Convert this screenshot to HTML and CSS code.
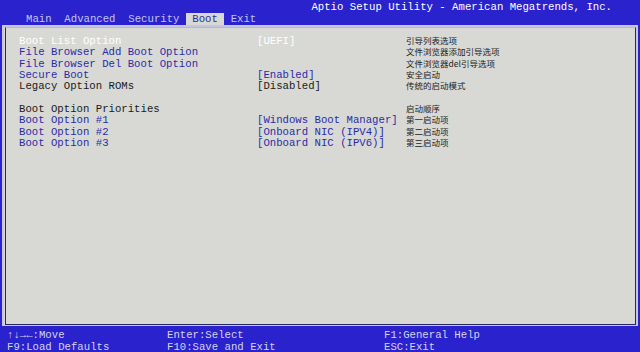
FILE: index.html
```html
<!DOCTYPE html>
<html>
<head>
  <title>Aptio Setup Utility</title>
  <link rel="stylesheet" href="styles.css">
</head>
<body>
  <div class="header">
    <div class="title">Aptio Setup Utility - American Megatrends, Inc.</div>
    <div class="tabs">
      <span class="tab">Main</span>
      <span class="tab">Advanced</span>
      <span class="tab">Security</span>
      <span class="tab active">Boot</span>
      <span class="tab">Exit</span>
    </div>
  </div>

  <div class="panel">
    <div class="frame">
      <div class="rows">
        <span class="label selected">Boot List Option</span>
        <span class="value selected">[UEFI]</span>
        <span class="help">引导列表选项</span>

        <span class="label">File Browser Add Boot Option</span>
        <span class="value"></span>
        <span class="help">文件浏览器添加引导选项</span>

        <span class="label">File Browser Del Boot Option</span>
        <span class="value"></span>
        <span class="help">文件浏览器del引导选项</span>

        <span class="label">Secure Boot</span>
        <span class="value">[Enabled]</span>
        <span class="help">安全启动</span>

        <span class="label fixed">Legacy Option ROMs</span>
        <span class="value fixed">[Disabled]</span>
        <span class="help">传统的启动模式</span>

        <span class="label"></span>
        <span class="value"></span>
        <span class="help"></span>

        <span class="label fixed">Boot Option Priorities</span>
        <span class="value"></span>
        <span class="help">启动顺序</span>

        <span class="label">Boot Option #1</span>
        <span class="value">[Windows Boot Manager]</span>
        <span class="help">第一启动项</span>

        <span class="label">Boot Option #2</span>
        <span class="value">[Onboard NIC (IPV4)]</span>
        <span class="help">第二启动项</span>

        <span class="label">Boot Option #3</span>
        <span class="value">[Onboard NIC (IPV6)]</span>
        <span class="help">第三启动项</span>
      </div>
    </div>
  </div>

  <div class="footer">
    <span>↑↓→←:Move</span>
    <span>Enter:Select</span>
    <span>F1:General Help</span>
    <span>F9:Load Defaults</span>
    <span>F10:Save and Exit</span>
    <span>ESC:Exit</span>
  </div>
</body>
</html>
```

FILE: styles.css
```css
/* Aptio setup screen */
body {
  margin: 0;
  width: 640px;
  height: 352px;
  background-color: #2a22cc;
  font-family: "Liberation Mono", "DejaVu Sans Mono", monospace;
  font-size: 10.66px;
  overflow: hidden;
}

.header {
  height: 25px;
  color: #ffffff;
}

.title {
  height: 12px;
  line-height: 12px;
  padding-top: 1px;
  text-align: right;
  padding-right: 28px;
}

.tabs {
  display: flex;
  padding-left: 19.6px;
  height: 12px;
}

.tab {
  padding: 0 6.4px;
  line-height: 12px;
  color: #c4c4ec;
}

.tab.active {
  background-color: #d8d9d5;
  color: #2b2ba8;
}

.panel {
  margin: 0 2px;
  height: 298px;
  background-color: #d8d9d5;
  border: 2px solid #c6c6e4;
  border-bottom-width: 1px;
}

.frame {
  height: 100%;
  box-sizing: border-box;
  margin-left: 1px;
  border: 1px solid #262660;
  border-top-color: #b8b8c8;
  padding: 8px 0 0 13px;
}

.rows {
  display: grid;
  grid-template-columns: 238px 149px 1fr;
  grid-auto-rows: 11.33px;
  line-height: 11.33px;
}

.label,
.value {
  color: #2b2ba8;
  white-space: nowrap;
}

.fixed {
  color: #1a1a1a;
}

.selected {
  color: #ffffff;
}

.help {
  align-self: start;
  font-family: "Noto Sans CJK SC", sans-serif;
  font-size: 8.5px;
  line-height: 8.5px;
  color: #222222;
  white-space: nowrap;
}

.footer {
  display: grid;
  grid-template-columns: 160px 217px 1fr;
  grid-auto-rows: 12px;
  line-height: 12px;
  padding: 3px 0 0 7px;
  color: #d4d4ec;
}
```
